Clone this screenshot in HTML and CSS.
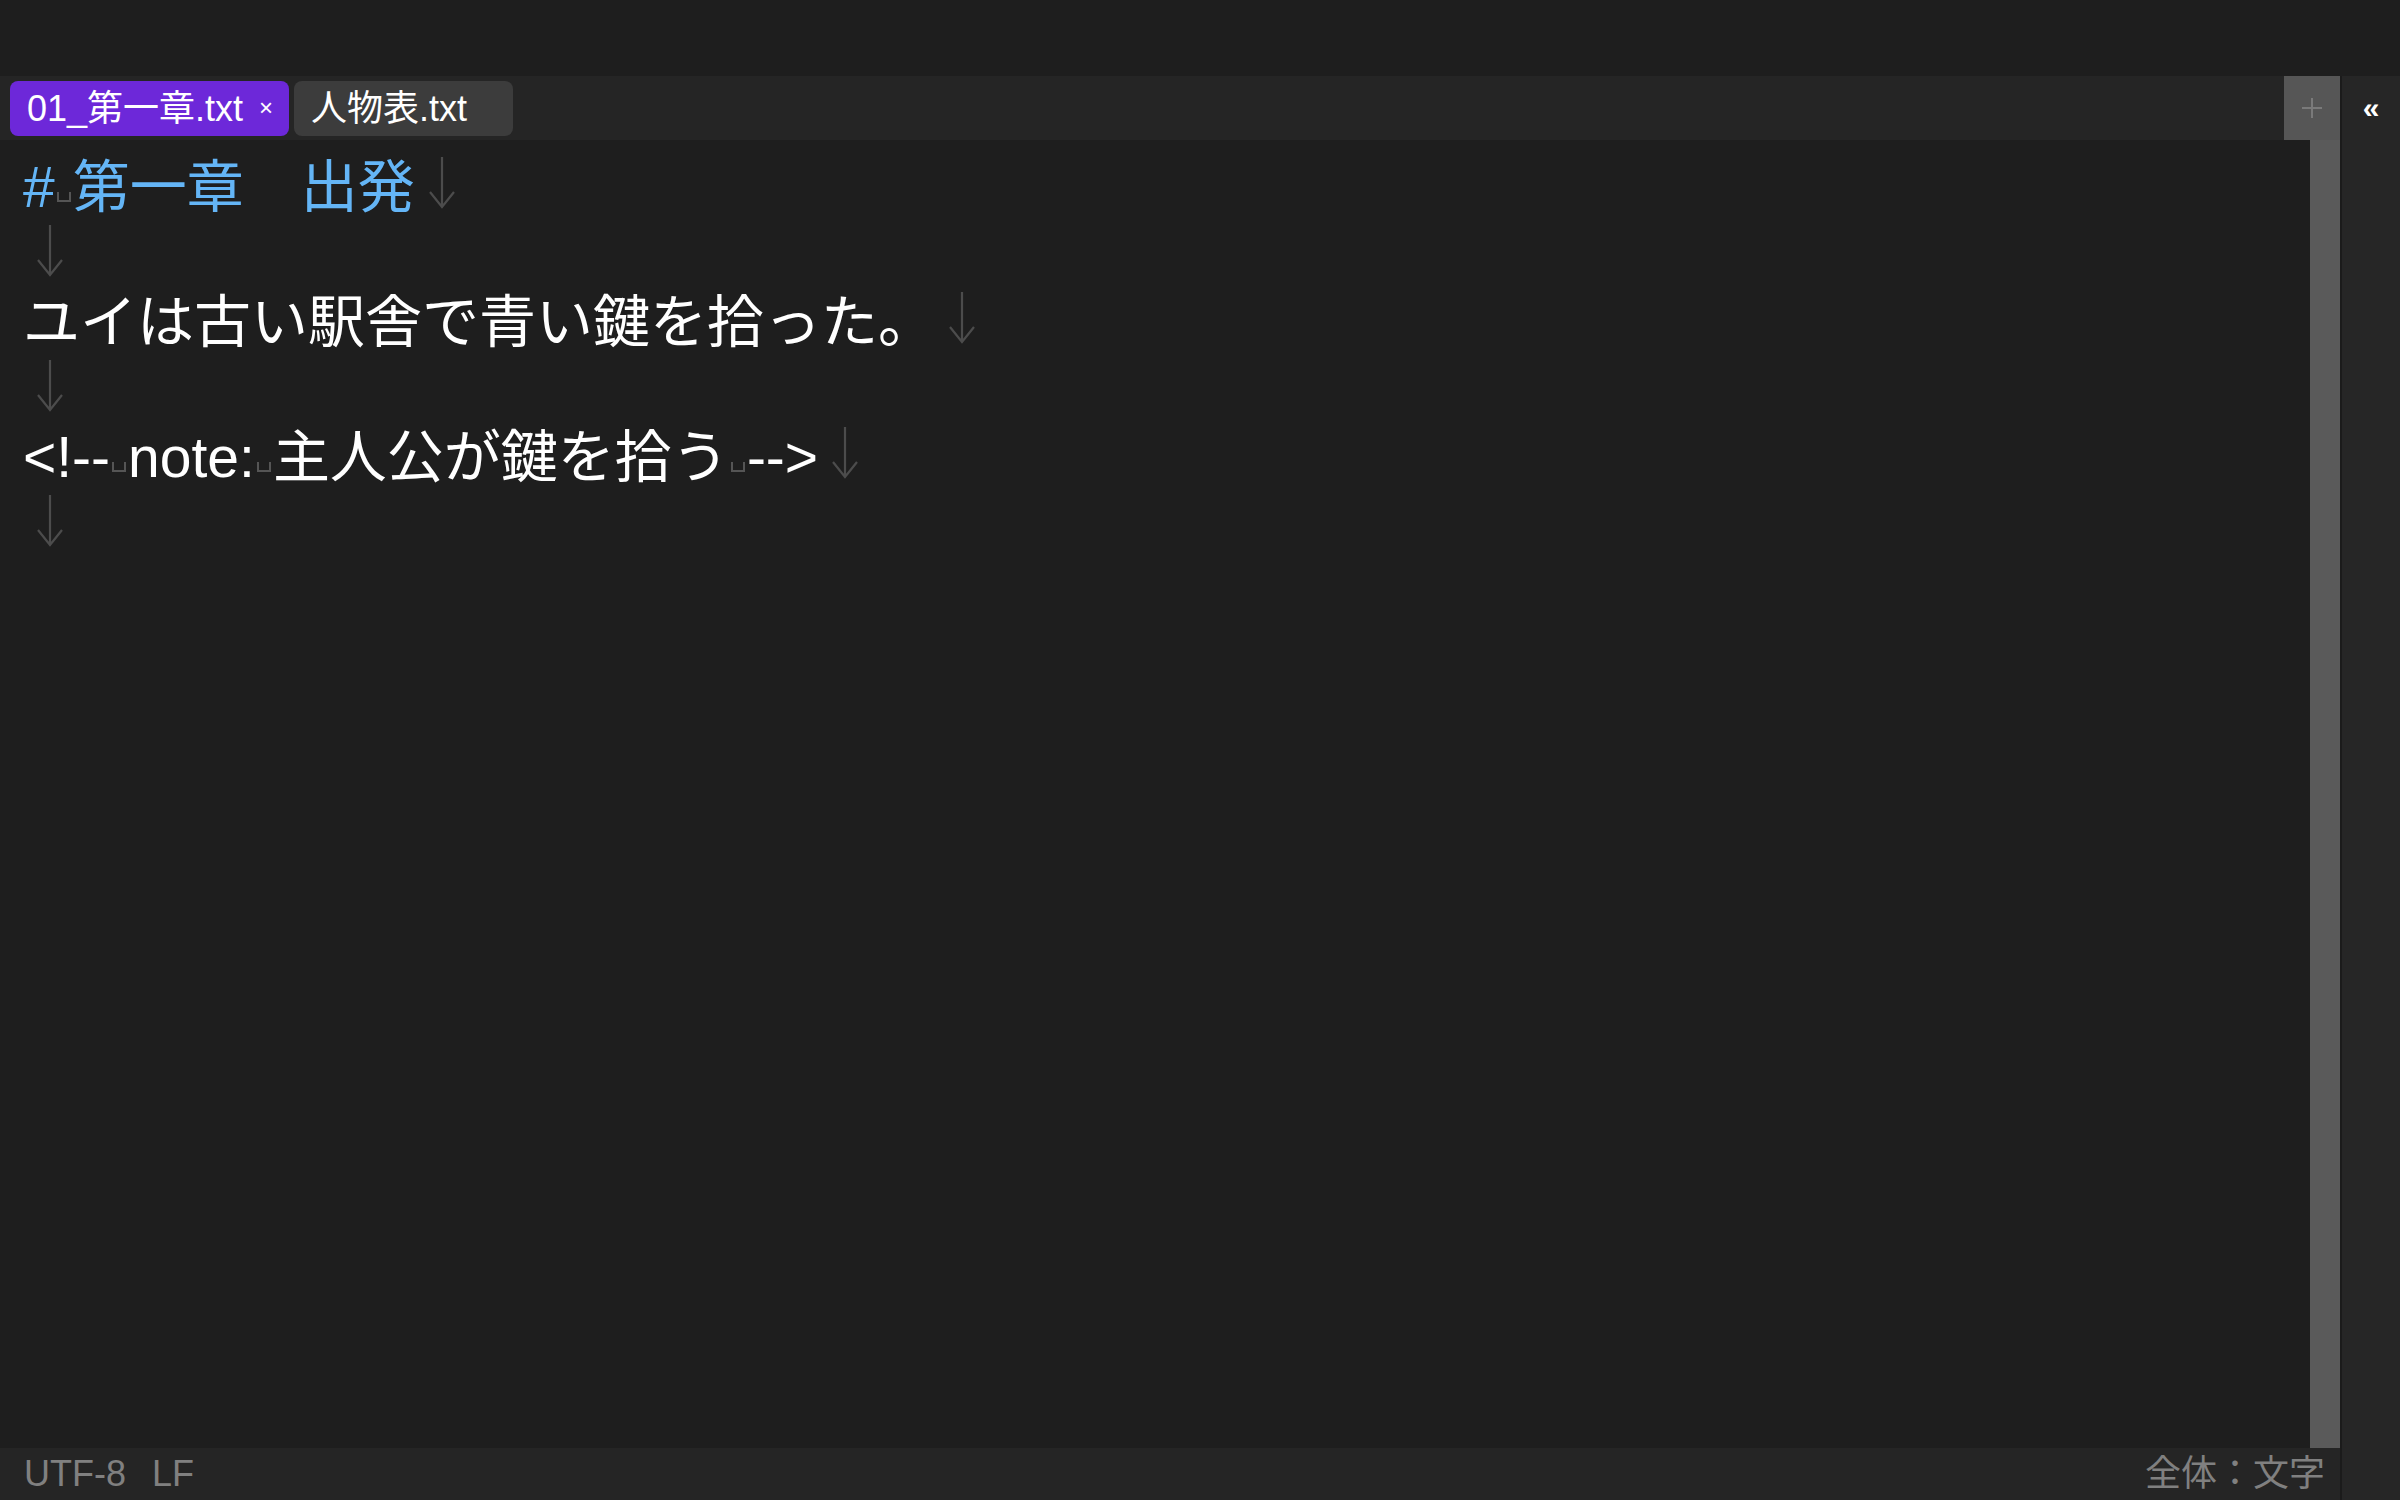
FILE: index.html
```html
<!DOCTYPE html>
<html lang="ja">
<head>
<meta charset="utf-8">
<title>Editor</title>
<link rel="stylesheet" href="styles.css">
</head>
<body>
<div class="app">
  <div class="titlebar"></div>
  <div class="main">
    <div class="workspace">
      <div class="tabbar">
        <div class="tabs">
          <div class="tab active"><span class="tab-name">01_第一章.txt</span><span class="tab-close">×</span></div>
          <div class="tab"><span class="tab-name">人物表.txt</span><span class="tab-close hidden">×</span></div>
        </div>
        <div class="tab-add">
          <svg width="22" height="22" viewBox="0 0 22 22"><path d="M11 1V21M1 11H21" stroke="#7a7a7a" stroke-width="2" fill="none"/></svg>
        </div>
      </div>
      <div class="editor-row">
        <div class="editor">
          <div class="line heading">#<span class="sp"></span>第一章　出発<svg class="eol" viewBox="0 0 26 52"><path d="M13 0V50M1 35L13 50L25 35" /></svg></div>
          <div class="line"><svg class="eol" viewBox="0 0 26 52"><path d="M13 0V50M1 35L13 50L25 35" /></svg></div>
          <div class="line">ユイは古い駅舎で青い鍵を拾った。<svg class="eol" viewBox="0 0 26 52"><path d="M13 0V50M1 35L13 50L25 35" /></svg></div>
          <div class="line"><svg class="eol" viewBox="0 0 26 52"><path d="M13 0V50M1 35L13 50L25 35" /></svg></div>
          <div class="line">&lt;!--<span class="sp"></span>note:<span class="sp"></span>主人公が鍵を拾う<span class="sp"></span>--&gt;<svg class="eol" viewBox="0 0 26 52"><path d="M13 0V50M1 35L13 50L25 35" /></svg></div>
          <div class="line"><svg class="eol" viewBox="0 0 26 52"><path d="M13 0V50M1 35L13 50L25 35" /></svg></div>
        </div>
        <div class="scrollbar"></div>
      </div>
      <div class="statusbar">
        <div class="status-left"><span>UTF-8</span><span>LF</span></div>
        <div class="status-right">全体：文字</div>
      </div>
    </div>
    <aside class="sidepanel">
      <div class="side-toggle">«</div>
    </aside>
  </div>
</div>
</body>
</html>
```
FILE: styles.css
```css
html, body {
  margin: 0;
  padding: 0;
}
body {
  background: #1e1e1e;
  width: 2400px;
  height: 1500px;
  overflow: hidden;
  font-family: "Liberation Sans", "Noto Sans CJK JP", sans-serif;
  color: #ffffff;
}
.app {
  display: flex;
  flex-direction: column;
  height: 1500px;
}
.titlebar {
  height: 76px;
  background: #1e1e1e;
}
.main {
  flex: 1;
  display: flex;
  min-height: 0;
}
.workspace {
  width: 2340px;
  display: flex;
  flex-direction: column;
}
.tabbar {
  height: 64px;
  background: #252525;
  display: flex;
}
.tabs {
  flex: 1;
  display: flex;
  align-items: center;
  gap: 5px;
  padding-left: 10px;
}
.tab {
  height: 55px;
  box-sizing: border-box;
  border-radius: 8px;
  background: #3c3c3c;
  padding: 0 17px 7px;
  display: flex;
  align-items: center;
  gap: 17px;
  font-size: 36px;
  color: #ffffff;
}
.tab.active {
  background: #6d28d9;
}
.tab-close {
  font-size: 24px;
  width: 12px;
  display: flex;
  justify-content: center;
  margin-top: 6px;
}
.tab-close.hidden {
  visibility: hidden;
}
.tab-add {
  width: 56px;
  background: #565656;
  display: flex;
  align-items: center;
  justify-content: center;
}
.editor-row {
  flex: 1;
  display: flex;
  min-height: 0;
}
.editor {
  flex: 1;
  padding: 14px 0 0 23px;
  font-size: 57px;
  line-height: 67.6px;
  color: #ffffff;
}
.line {
  height: 67.6px;
  white-space: pre;
}
.line.heading {
  color: #64b5f6;
}
.sp {
  display: inline-block;
  width: 14px;
  height: 10px;
  box-sizing: border-box;
  border: 2px solid #555555;
  border-top: none;
  margin: 0 2px;
  vertical-align: 5px;
}
.eol {
  display: inline-block;
  width: 26px;
  height: 52px;
  margin-left: 14px;
  vertical-align: -2px;
  fill: none;
  stroke: #4c4c4c;
  stroke-width: 2.2;
}
.scrollbar {
  width: 30px;
  background: #5a5a5a;
}
.statusbar {
  height: 52px;
  background: #252525;
  display: flex;
  justify-content: space-between;
  align-items: center;
  padding: 0 15px 0 24px;
  font-size: 36px;
  line-height: 52px;
  color: #808080;
}
.status-left {
  display: flex;
  gap: 26px;
}
.sidepanel {
  width: 60px;
  box-sizing: border-box;
  background: #262626;
  border-left: 2px solid #1b1b1b;
}
.side-toggle {
  height: 64px;
  display: flex;
  align-items: center;
  justify-content: center;
  font-size: 30px;
  font-weight: bold;
  color: #ffffff;
}
```
